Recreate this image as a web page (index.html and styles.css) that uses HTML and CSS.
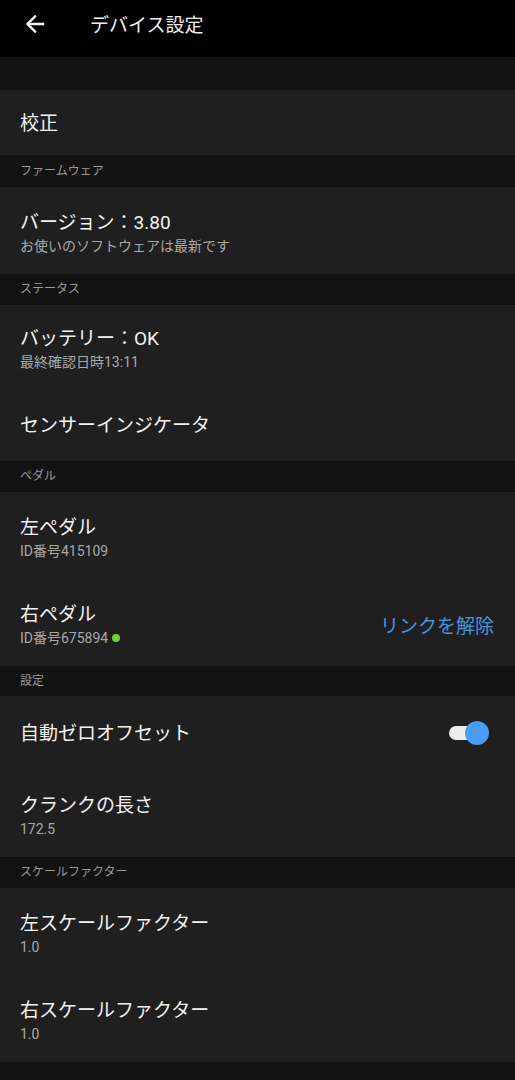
FILE: index.html
```html
<!DOCTYPE html>
<html lang="ja">
	<head>
		<meta charset="UTF-8">
		<title>デバイス設定</title>
		<link rel="stylesheet" href="styles.css">
	</head>
	<body>
		<div class="appbar">
			<svg class="back" width="24" height="24" viewBox="0 0 24 24">
				<path d="M20 12H5M12 4.5L4.5 12l7.5 7.5" fill="none" stroke="#f2f2f2" stroke-width="2.4" stroke-linecap="square"/>
			</svg>
			<h1 class="title">デバイス設定</h1>
		</div>
		<div class="spacer"></div>

		<div class="item first">
			<div class="label">校正</div>
		</div>

		<div class="section tall">ファームウェア</div>
		<div class="item two">
			<div class="label">バージョン：3.80</div>
			<div class="sub">お使いのソフトウェアは最新です</div>
		</div>

		<div class="section">ステータス</div>
		<div class="item two short">
			<div class="label">バッテリー：OK</div>
			<div class="sub">最終確認日時13:11</div>
		</div>
		<div class="item one">
			<div class="label">センサーインジケータ</div>
		</div>

		<div class="section">ペダル</div>
		<div class="item two">
			<div class="label">左ペダル</div>
			<div class="sub">ID番号415109</div>
		</div>
		<div class="item two row">
			<div class="text">
				<div class="label">右ペダル</div>
				<div class="sub">ID番号675894<span class="dot"></span></div>
			</div>
			<div class="action">リンクを解除</div>
		</div>

		<div class="section thin">設定</div>
		<div class="item one row tall">
			<div class="label">自動ゼロオフセット</div>
			<div class="switch"><span class="knob"></span></div>
		</div>
		<div class="item two">
			<div class="label">クランクの長さ</div>
			<div class="sub">172.5</div>
		</div>

		<div class="section">スケールファクター</div>
		<div class="item two">
			<div class="label">左スケールファクター</div>
			<div class="sub">1.0</div>
		</div>
		<div class="item two">
			<div class="label">右スケールファクター</div>
			<div class="sub">1.0</div>
		</div>
	</body>
</html>
```

FILE: styles.css
```css
html {
	font-family: Roboto, "Noto Sans CJK JP", sans-serif;
}

body {
	margin: 0;
	background-color: #121212;
	color: #f0f0f0;
}

.appbar {
	display: flex;
	align-items: center;
	height: 57px;
	background-color: #000;
	box-sizing: border-box;
	padding-left: 23px;
	padding-bottom: 10px;
}

.back {
	display: block;
}

.title {
	margin: 0 0 0 43px;
	font-size: 19px;
	font-weight: normal;
	color: #eeeeee;
}

.spacer {
	height: 33px;
}

.item {
	display: flex;
	flex-direction: column;
	justify-content: center;
	background-color: #1f1f1f;
	padding: 0 20px;
	box-sizing: border-box;
}
.item.first {
	height: 65px;
	padding-top: 2px;
}
.item.one {
	height: 73px;
	padding-top: 2px;
}
.item.one.tall {
	height: 74px;
	padding-top: 0;
}
.item.two {
	height: 87px;
	padding-top: 3px;
}
.item.two.short {
	height: 83px;
}
.item.row {
	flex-direction: row;
	align-items: center;
	justify-content: space-between;
}

.label {
	font-size: 19px;
	line-height: 27px;
	color: #f2f2f2;
}
.sub {
	font-size: 14px;
	line-height: 20px;
	color: #a8a8a8;
	display: flex;
	align-items: center;
}

.section {
	height: 31px;
	line-height: 31px;
	padding-left: 20px;
	font-size: 12px;
	color: #9a9a9a;
	background-color: #121212;
}
.section.tall {
	height: 32px;
	line-height: 32px;
}
.section.thin {
	height: 30px;
	line-height: 30px;
}

.dot {
	display: inline-block;
	width: 8px;
	height: 8px;
	border-radius: 50%;
	background-color: #6fd23a;
	margin-left: 4px;
	margin-top: 1px;
}

.action {
	font-size: 19px;
	color: #4a94e0;
	margin-right: 1px;
}

.switch {
	position: relative;
	width: 28px;
	height: 14px;
	border-radius: 7px;
	background-color: #ececec;
	margin-right: 18px;
}
.knob {
	position: absolute;
	right: -12px;
	top: -5px;
	width: 24px;
	height: 24px;
	border-radius: 50%;
	background-color: #4a9cf2;
}
```
